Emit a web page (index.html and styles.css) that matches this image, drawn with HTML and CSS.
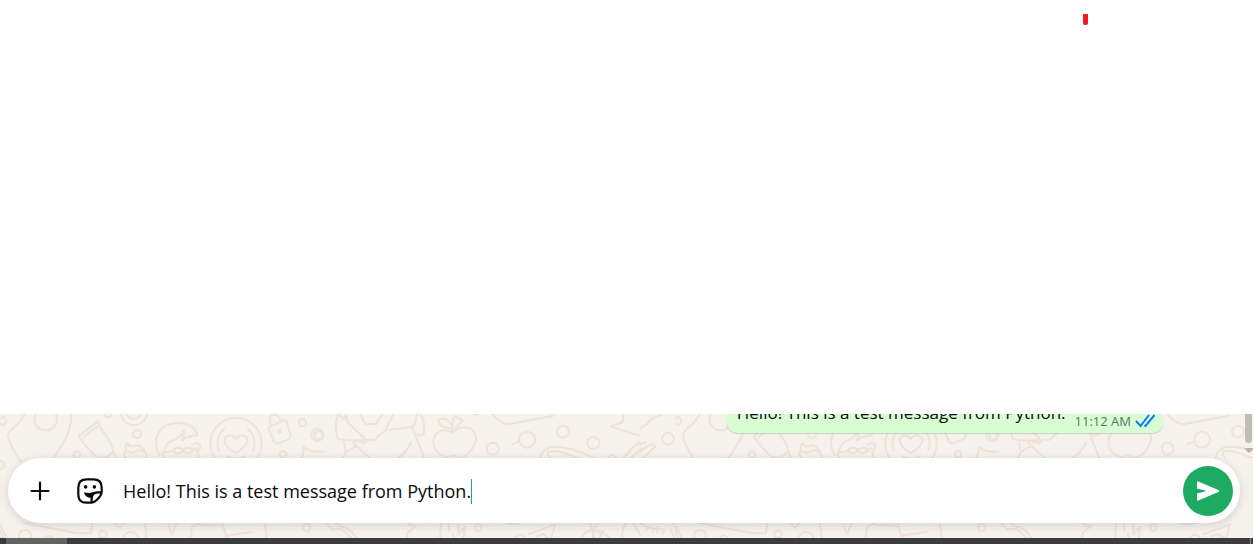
FILE: index.html
```html
<!DOCTYPE html>
<html lang="en">
<head>
<meta charset="utf-8">
<title>Chat</title>
<link rel="stylesheet" href="styles.css">
</head>
<body>
<div class="blank"><span class="mark"></span></div>
<main class="chat">
  <svg class="wallpaper" aria-hidden="true">
    <defs>
      <pattern id="doodles" width="675" height="124" patternUnits="userSpaceOnUse">
        <g transform="scale(.33333) translate(0 -12)" fill="none" stroke="#eee2db" stroke-width="6" stroke-linecap="round" stroke-linejoin="round">
          <circle cx="8" cy="33" r="11"/><circle cx="0" cy="165" r="12"/>
          <path d="M75 8C65 45 22 55 24 78C30 112 48 130 62 155M213 8C218 70 180 115 152 155"/>
          <circle cx="137" cy="27" r="34"/><circle cx="231" cy="134" r="10"/>
          <path d="M236 78L294 34L302 55Q332 92 341 124L318 144L289 140Q258 113 236 78ZM251 81L291 50M341 126L349 150"/>
          <circle cx="323" cy="12" r="10"/><circle cx="402" cy="5" r="40"/><circle cx="402" cy="5" r="22"/>
          <circle cx="411" cy="73" r="12"/>
          <path d="M382 150Q366 132 378 121Q374 105 382 99Q388 112 402 108Q420 104 424 112Q440 122 440 150M382 125Q400 132 410 122Q421 118 432 126"/>
          <path d="M478 135C452 85 480 40 530 40C565 38 586 52 592 75C570 78 553 82 546 91C553 78 551 67 553 60C540 85 524 88 505 99C495 106 494 123 486 132M492 126Q518 127 522 118Q538 107 548 120Q566 107 577 118L591 115M520 123Q532 138 549 122Q563 139 580 120M577 104Q592 95 601 106Q604 119 591 122L598 150M490 135L494 150"/>
          <circle cx="708" cy="101" r="77"/><path d="M674 57Q644 78 656 122M742 57Q772 78 760 122M682 139Q708 153 734 139M707 129Q675 110 674 93C674 71 699 72 707 88C716 72 742 72 742 94Q740 110 707 129Z"/>
          <path d="M810 50L848 32Q857 28 861 37L872 75Q873 83 864 88L834 100Q826 101 821 93L806 58Q804 52 810 50ZM812 43L808 24Q815 8 833 17L842 31"/>
          <circle cx="838" cy="64" r="4"/><circle cx="907" cy="38" r="11"/><circle cx="952" cy="75" r="18"/><circle cx="849" cy="133" r="10"/>
          <path d="M900 150Q913 130 911 111Q930 128 970 125"/>
          <path d="M0 345L20 384M70 339L108 346L232 370L272 370L278 339M345 339L359 353L374 339M435 339L440 390M504 339L515 374L530 339M570 390L576 350L602 339M602 345L665 347M668 343L682 390M678 377L755 366M795 345L801 390M0 362L12 390"/>
          <circle cx="75" cy="378" r="18"/><circle cx="146" cy="390" r="13"/><circle cx="309" cy="373" r="11"/><circle cx="393" cy="390" r="24"/><circle cx="920" cy="353" r="11"/>
          <g transform="translate(960)">
            <circle cx="-4" cy="76" r="12"/>
            <path d="M56 8Q42 40 52 85Q57 93 138 90L84 38L78 16L70 28L56 8M138 90Q142 98 130 99L104 91L100 99L110 107L78 126L66 150M72 92L76 120M118 8L136 42L168 42L190 8M222 8L196 61L164 89L138 90M210 59L276 51L315 150M276 51Q290 40 288 18L300 8Q315 30 312 70Q300 82 292 72M273 97Q260 128 226 150M109 107L156 150"/>
            <path d="M396 68C370 52 339 66 340 98C342 126 365 142 386 142Q401 132 412 142C435 150 468 112 468 82C465 50 425 42 396 68ZM392 68L402 18L428 31L398 64M388 54Q358 55 355 28Q380 20 395 45"/>
            <circle cx="518" cy="116" r="18"/><circle cx="621" cy="89" r="24"/><circle cx="729" cy="65" r="18"/><circle cx="820" cy="99" r="18"/>
            <path d="M576 104L595 95M514 8Q535 38 565 43L700 17M458 10L468 14L476 8M911 8L908 36L872 50L955 76M662 150C660 130 675 112 700 110C745 110 800 130 830 150M690 143C665 115 715 122 735 130L788 150M905 150L940 110L960 97M927 150L965 115"/><circle cx="877" cy="145" r="10"/>
            <path d="M18 339Q30 352 38 360Q60 350 80 370L100 390M45 339L64 350Q90 349 112 390M265 339Q267 350 288 347L262 370L262 390M363 339L360 390M385 339L388 360M399 370L402 390M415 343L415 374L435 350L430 390M556 339Q574 347 600 339M626 373L705 343L692 390L670 372L650 378M782 390C790 354 840 350 875 390M811 339L825 390M830 342Q815 365 821 390M850 363L835 390M920 339Q900 360 910 390M940 339L960 375"/>
            <circle cx="475" cy="353" r="10"/><circle cx="600" cy="390" r="16"/>
          </g>
          <g transform="translate(1920)">
            <path d="M0 55L24 40Q35 22 65 14M0 125L28 106Q42 98 45 110L5 148M0 105L18 96"/>
            <circle cx="84" cy="86" r="18"/>
            <path d="M2 341L25 352L18 362M22 352L42 356L37 366M42 356L74 359L67 371M55 350L50 368M91 356L105 390M99 341L125 377"/>
          </g>
        </g>
      </pattern>
    </defs>
    <rect width="100%" height="100%" fill="url(#doodles)"/>
  </svg>
  <section class="messages">
    <div class="bubble">
      <p class="bubble-text">Hello! This is a test message from Python.</p>
      <div class="meta"><time>11:12 AM</time>
        <svg width="20" height="14" viewBox="0 0 20 14" fill="none" stroke="#087dfb" stroke-width="2" role="img" aria-label="Read"><path d="M1 7L5.5 12L14 1M9.5 11L10.5 12L19.5 1"/></svg>
      </div>
    </div>
    <div class="scrollbar"><span class="thumb"></span><span class="arrow"></span></div>
  </section>
  <form class="composer">
    <button class="tool" type="button" aria-label="Attach"><svg width="20" height="20" viewBox="0 0 20 20" stroke="#0a0a0a" stroke-width="2.2" stroke-linecap="round"><path d="M10 1.5V18.5M1.5 10H18.5"/></svg></button>
    <button class="tool" type="button" aria-label="Stickers"><svg width="26" height="26" viewBox="0 0 26 26" fill="none" stroke="#0a0a0a" stroke-width="2.2" stroke-linejoin="round"><path d="M9.5 1.3H16.5Q24.7 1.3 24.7 9.5V13.5C24.7 18 18.5 24.7 14 24.7H9.5Q1.3 24.7 1.3 16.5V9.5Q1.3 1.3 9.5 1.3Z"/><path d="M14.6 24.2V21Q14.8 14.6 20.5 14.4H24.2"/><path d="M7 14.2C10 15.2 14.5 15.2 18 13.8L14.6 19.8C10.5 20 7.5 17.5 7 14.2Z" fill="#0a0a0a" stroke="none"/><circle cx="8.6" cy="8.9" r="1.8" fill="#0a0a0a" stroke="none"/><circle cx="17.4" cy="8.9" r="1.8" fill="#0a0a0a" stroke="none"/></svg></button>
    <div class="field"><input class="entry" type="text" aria-label="Type a message" value="Hello! This is a test message from Python."><span class="caret"></span></div>
    <button class="send" type="submit" aria-label="Send"><svg width="24" height="20" viewBox="0 0 24 20"><path d="M1 1.2Q1 0 2.2.5L22.5 9Q24 10 22.5 11L2.2 19.5Q1 20 1 18.8V12.5L10.5 10L1 7.5Z" fill="#fff"/></svg></button>
  </form>
</main>
<footer class="taskbar"><span class="task"></span><span class="edge"></span></footer>
</body>
</html>
```
FILE: styles.css
```css
* { box-sizing: border-box; }
body {
  margin: 0;
  min-height: 100vh;
  display: flex;
  flex-direction: column;
  background: #fff;
  color: #0a0a0a;
  font-family: "Open Sans", "Noto Sans", sans-serif;
}
.blank { flex: 1; position: relative; }
.mark {
  position: absolute;
  top: 14px;
  right: 165px;
  width: 5px;
  height: 11px;
  border-radius: 0 0 2px 2px;
  background: #ec1c24;
}
.chat {
  position: relative;
  padding-bottom: 15px;
  background: #f5f1eb;
  overflow: hidden;
}
.wallpaper {
  position: absolute;
  inset: 0;
  width: 100%;
  height: 100%;
}
.messages {
  position: relative;
  height: 44px;
  padding: 0 90px 25px 0;
  display: flex;
  justify-content: flex-end;
  align-items: flex-end;
  overflow: hidden;
}
.bubble {
  display: flex;
  align-items: flex-end;
  gap: 9px;
  padding: 8px 8px 3px 10px;
  border-radius: 10px;
  background: #d9fdd3;
  box-shadow: 0 1px 1px rgba(11, 20, 26, .16);
}
.bubble-text {
  margin: 0 0 5px;
  font-size: 17px;
  line-height: 24px;
  white-space: nowrap;
}
.meta {
  display: flex;
  align-items: center;
  gap: 4px;
  color: #5f7463;
  font-size: 13px;
  line-height: 18px;
  white-space: nowrap;
}
.scrollbar {
  position: absolute;
  top: 0;
  right: 0;
  width: 9px;
  display: flex;
  flex-direction: column;
  align-items: center;
  gap: 5px;
}
.thumb {
  width: 7px;
  height: 29px;
  border-radius: 0 0 4px 4px;
  background: #c1beb9;
}
.arrow {
  border: 5px solid transparent;
  border-top-color: #b5b2ad;
  border-bottom: 0;
}
.composer {
  position: relative;
  display: flex;
  align-items: center;
  margin: 0 13px 0 8px;
  padding: 8px 7px 7px;
  border-radius: 33px;
  background: #fff;
  box-shadow: 0 2px 10px rgba(11, 20, 26, .14);
}
.tool, .send {
  display: grid;
  place-items: center;
  flex: none;
  width: 50px;
  height: 50px;
  padding: 0;
  border: 0;
  border-radius: 50%;
  background: none;
}
.send { background: #1daa61; }
.field {
  flex: 1;
  display: flex;
  align-items: center;
  padding-left: 8px;
}
.entry {
  field-sizing: content;
  padding: 0;
  border: 0;
  outline: 0;
  background: none;
  color: inherit;
  font: 18px/25px "Open Sans", "Noto Sans", sans-serif;
}
.caret { width: 1px; height: 25px; background: #1daa61; }
.taskbar {
  display: flex;
  justify-content: space-between;
  height: 6px;
  padding: 0 2px 0 6px;
  background: #3c3c3e;
}
.task { width: 61px; background: #626263; }
.edge { width: 1px; background: #8a8a8a; }
```
